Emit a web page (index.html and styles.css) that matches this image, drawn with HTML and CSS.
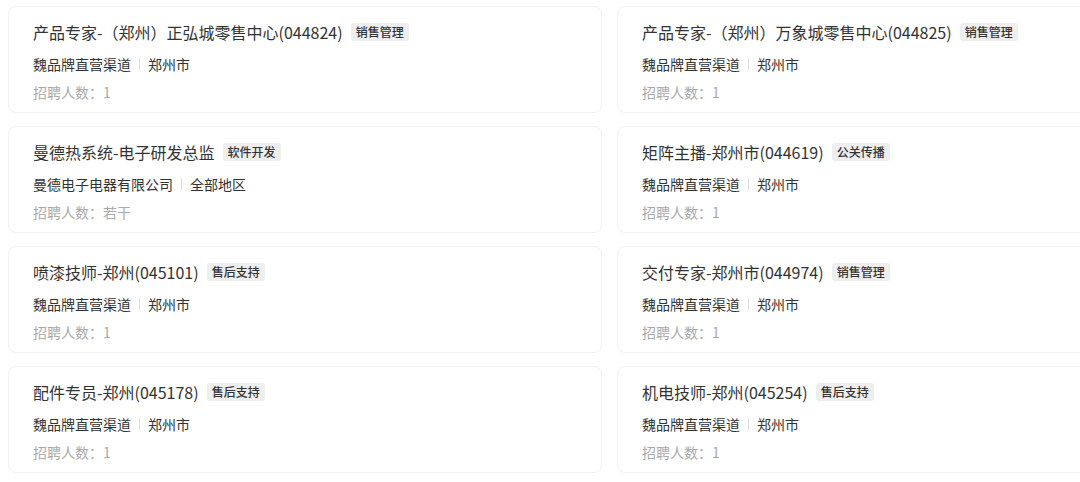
FILE: index.html
```html
<!DOCTYPE html>
<html lang="zh-CN">
<head>
    <meta charset="UTF-8">
    <meta name="viewport" content="width=device-width, initial-scale=1.0">
    <title>职位列表</title>
    <link rel="stylesheet" href="styles.css">
</head>
<body>
    <div class="job-list">
        <div class="job-card">
            <div class="job-title">产品专家-（郑州）正弘城零售中心(044824)<span class="tag">销售管理</span></div>
            <div class="job-company">魏品牌直营渠道<span class="sep"></span>郑州市</div>
            <div class="job-count">招聘人数：1</div>
        </div>
        <div class="job-card">
            <div class="job-title">产品专家-（郑州）万象城零售中心(044825)<span class="tag">销售管理</span></div>
            <div class="job-company">魏品牌直营渠道<span class="sep"></span>郑州市</div>
            <div class="job-count">招聘人数：1</div>
        </div>
        <div class="job-card">
            <div class="job-title">曼德热系统-电子研发总监<span class="tag">软件开发</span></div>
            <div class="job-company">曼德电子电器有限公司<span class="sep"></span>全部地区</div>
            <div class="job-count">招聘人数：若干</div>
        </div>
        <div class="job-card">
            <div class="job-title">矩阵主播-郑州市(044619)<span class="tag">公关传播</span></div>
            <div class="job-company">魏品牌直营渠道<span class="sep"></span>郑州市</div>
            <div class="job-count">招聘人数：1</div>
        </div>
        <div class="job-card">
            <div class="job-title">喷漆技师-郑州(045101)<span class="tag">售后支持</span></div>
            <div class="job-company">魏品牌直营渠道<span class="sep"></span>郑州市</div>
            <div class="job-count">招聘人数：1</div>
        </div>
        <div class="job-card">
            <div class="job-title">交付专家-郑州市(044974)<span class="tag">销售管理</span></div>
            <div class="job-company">魏品牌直营渠道<span class="sep"></span>郑州市</div>
            <div class="job-count">招聘人数：1</div>
        </div>
        <div class="job-card">
            <div class="job-title">配件专员-郑州(045178)<span class="tag">售后支持</span></div>
            <div class="job-company">魏品牌直营渠道<span class="sep"></span>郑州市</div>
            <div class="job-count">招聘人数：1</div>
        </div>
        <div class="job-card">
            <div class="job-title">机电技师-郑州(045254)<span class="tag">售后支持</span></div>
            <div class="job-company">魏品牌直营渠道<span class="sep"></span>郑州市</div>
            <div class="job-count">招聘人数：1</div>
        </div>
    </div>
</body>
</html>
```

FILE: styles.css
```css
/* Reset */
* {
    margin: 0;
    padding: 0;
    box-sizing: border-box;
}

body {
    font-family: "Noto Sans CJK SC", "Noto Sans", sans-serif;
    background-color: #fff;
    color: #333;
    overflow: hidden;
}

/* Two column grid of job cards */
.job-list {
    display: grid;
    grid-template-columns: 594px 594px;
    column-gap: 15px;
    row-gap: 13px;
    padding: 6px 0 0 8px;
    width: 1220px;
}

.job-card {
    height: 107px;
    border: 1px solid #f2f2f2;
    border-radius: 8px;
    background: #fff;
    padding: 13px 24px 0;
}

.job-title {
    display: flex;
    align-items: center;
    height: 24px;
    font-size: 16px;
    color: #333;
    white-space: nowrap;
}

.tag {
    display: inline-block;
    margin-left: 8px;
    padding: 0 5px;
    height: 18px;
    line-height: 18px;
    font-size: 12px;
    font-weight: 500;
    color: #333;
    background: #eeeeee;
    border-radius: 3px;
}

.job-company {
    display: flex;
    align-items: center;
    margin-top: 9px;
    height: 22px;
    font-size: 14px;
    color: #333;
}

.sep {
    width: 1px;
    height: 12px;
    background: #ddd;
    margin: 0 8px;
}

.job-count {
    margin-top: 7px;
    height: 20px;
    line-height: 20px;
    font-size: 14px;
    color: #aaa;
}
```
